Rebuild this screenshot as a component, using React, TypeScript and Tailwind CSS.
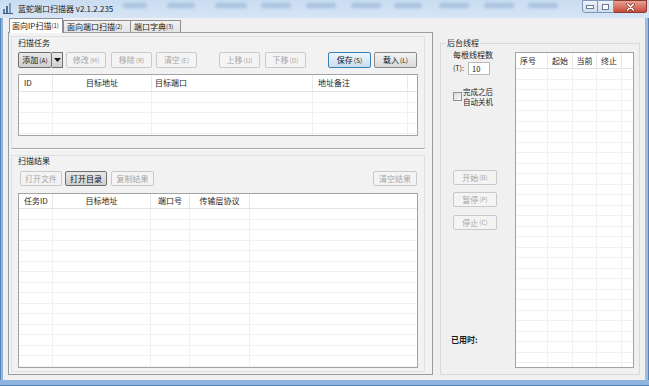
import React from "react";

type Col = { cls: string; label: string; center?: boolean; pad?: string };

function List({
  cols,
  size,
  headerH,
  rowH,
  rows,
}: {
  cols: Col[];
  size: string;
  headerH: string;
  rowH: string;
  rows: number;
}) {
  return (
    <div className={`flex flex-col border border-[#a3a3a3] bg-white overflow-hidden shrink-0 ${size}`}>
      <div className={`flex shrink-0 border-b border-[#e2e2e2] ${headerH}`}>
        {cols.map((c, i) => (
          <div
            key={i}
            className={`${c.cls} shrink-0 h-full border-r border-[#e8e8e8] flex items-center text-[8px] leading-none text-[#1e1e1e] ${
              c.center ? "justify-center" : "justify-start"
            } ${c.pad ?? ""}`}
          >
            {c.label}
          </div>
        ))}
        <div className="flex-1" />
      </div>
      {Array.from({ length: rows }).map((_, r) => (
        <div key={r} className={`flex shrink-0 border-b border-[#f1f1f1] ${rowH}`}>
          {cols.map((c, i) => (
            <div key={i} className={`${c.cls} shrink-0 h-full border-r border-[#f1f1f1]`} />
          ))}
          <div className="flex-1" />
        </div>
      ))}
    </div>
  );
}

function Btn({
  label,
  hk,
  cls,
  kind,
}: {
  label: string;
  hk?: string;
  cls: string;
  kind: "dis" | "en" | "def" | "dark";
}) {
  const k =
    kind === "dis"
      ? "border-[#c9c9c9] bg-[#f4f4f4] text-[#a6a6a6]"
      : kind === "def"
      ? "border-[#3c7fb1] bg-linear-to-b from-[#eef6fc] to-[#c9def0] text-[#111]"
      : kind === "dark"
      ? "border-[#6f6f6f] bg-linear-to-b from-[#e9e9e9] to-[#cfcfcf] text-[#111]"
      : "border-[#8a8a8a] bg-linear-to-b from-[#f4f4f4] to-[#dadada] text-[#111]";
  return (
    <div
      className={`shrink-0 flex items-center justify-center border rounded-[2px] text-[8px] leading-none ${k} ${cls}`}
    >
      <span>{label}</span>
      {hk && <span className="text-[6.5px] ml-[1px]">{hk}</span>}
    </div>
  );
}

const smudges: [number, number][] = [
  [10, 24],
  [20, 28],
  [20, 32],
  [14, 30],
  [15, 30],
  [15, 30],
  [13, 28],
  [17, 30],
  [15, 30],
  [14, 30],
];

export default function App() {
  const upperCols: Col[] = [
    { cls: "w-[34px]", label: "ID", pad: "pl-[5px]" },
    { cls: "w-[99px]", label: "目标地址", center: true },
    { cls: "w-[161px]", label: "目标端口", pad: "pl-[3px]" },
    { cls: "w-[95px]", label: "地址备注", pad: "pl-[5px]" },
  ];
  const lowerCols: Col[] = [
    { cls: "w-[34px]", label: "任务ID", pad: "pl-[5px]" },
    { cls: "w-[98px]", label: "目标地址", center: true },
    { cls: "w-[39px]", label: "端口号", center: true },
    { cls: "w-[60px]", label: "传输层协议", center: true },
  ];
  const rightCols: Col[] = [
    { cls: "w-[32px]", label: "序号", pad: "pl-[4px]" },
    { cls: "w-[25px]", label: "起始", center: true },
    { cls: "w-[24px]", label: "当前", center: true },
    { cls: "w-[25px]", label: "终止", center: true },
  ];

  return (
    <div className="w-[649px] h-[386px] overflow-hidden flex flex-col bg-[#bcd3ec] font-['Noto_Sans_CJK_SC','Noto_Sans',sans-serif] text-[#1c1c1c]">
      {/* Title bar */}
      <div className="h-[18px] shrink-0 flex items-start bg-linear-to-b from-[#c9dcf1] to-[#d6e5f5]">
        <svg className="mt-[3px] ml-[3px] shrink-0" width="10" height="11" viewBox="0 0 10 11">
          <rect x="0" y="6" width="2" height="5" fill="#5a7fa8" />
          <rect x="3" y="3" width="2" height="8" fill="#4a6f9a" />
          <rect x="6" y="0" width="2" height="11" fill="#7d9cc0" />
          <rect x="0" y="10" width="10" height="1" fill="#3f5f85" />
        </svg>
        <div className="ml-[5px] mt-[4px] h-[10px] leading-[10px] text-[8px] text-[#1a1a1a] whitespace-nowrap shrink-0">
          蓝蛇端口扫描器 v2.1.2.235
        </div>
        <div className="flex items-start mt-[3px] shrink-0">
          {smudges.map(([m, w], i) => (
            <div
              key={i}
              className="h-[5px] rounded-[3px] bg-[#a9c2e0] blur-[1.5px]"
              style={{ marginLeft: m, width: w }}
            />
          ))}
        </div>
        <div className="ml-auto mr-[2px] flex shrink-0">
          <div className="w-[16px] h-[13px] border border-[#7d98bb] rounded-bl-[3px] bg-linear-to-b from-[#eef3fa] to-[#cddcee] flex items-end justify-center pb-[3px]">
            <div className="w-[6px] h-[2px] bg-white border border-[#6c7c90] box-content" />
          </div>
          <div className="w-[16px] h-[13px] border border-l-0 border-[#7d98bb] bg-linear-to-b from-[#eef3fa] to-[#cddcee] flex items-center justify-center">
            <div className="w-[7px] h-[6px] border border-[#6c7c90] bg-white" />
          </div>
          <div className="w-[33px] h-[13px] border border-l-0 border-[#8a3a33] rounded-br-[3px] bg-linear-to-b from-[#e8a394] to-[#c8473a] flex items-center justify-center">
            <svg width="9" height="8" viewBox="0 0 9 8">
              <path d="M1.5 1 L7.5 7 M7.5 1 L1.5 7" stroke="#7a3a33" strokeWidth="3" strokeLinecap="round" />
              <path d="M1.5 1 L7.5 7 M7.5 1 L1.5 7" stroke="#ffffff" strokeWidth="1.6" strokeLinecap="round" />
            </svg>
          </div>
        </div>
      </div>

      {/* Body */}
      <div className="flex h-[362px] shrink-0">
        <div className="w-[3px] shrink-0 bg-[#8fb3da] border-l border-[#5584b9]" />
        <div className="w-[642px] shrink-0 bg-[#f0f0f0] flex items-start">
          {/* Tab control */}
          <div className="ml-[5px] w-[425px] shrink-0 flex flex-col">
            <div className="h-[14px] flex items-end pl-[1px]">
              <div className="relative z-10 w-[54px] h-[15px] -mb-[1px] bg-white border border-b-0 border-[#8c8e94] flex items-center pl-[2px] text-[8px] leading-none whitespace-nowrap">
                面向IP扫描<span className="text-[6px]">(1)</span>
              </div>
              <div className="w-[68px] h-[12px] bg-linear-to-b from-[#f3f3f3] to-[#e3e3e3] border border-b-0 border-[#8c8e94] flex items-center pl-[3px] text-[8px] leading-none whitespace-nowrap">
                面向端口扫描<span className="text-[6px]">(2)</span>
              </div>
              <div className="w-[50px] h-[12px] bg-linear-to-b from-[#f3f3f3] to-[#e3e3e3] border border-b-0 border-l-0 border-[#8c8e94] flex items-center pl-[3px] text-[8px] leading-none whitespace-nowrap">
                端口字典<span className="text-[6px]">(3)</span>
              </div>
            </div>
            <div className="h-[343px] border border-[#9a9ca2] bg-[#f2f2f2] flex flex-col">
              {/* Upper group */}
              <div className="mt-[3px] ml-[2px] w-[414px] h-[113px] shrink-0 border border-[#e0e0e0] border-b-[#a6a6a6] shadow-[0_1px_0_#ffffff] pl-[6px] flex flex-col">
                <div className="mt-[1px] h-[10px] leading-[10px] text-[8px]">扫描任务</div>
                <div className="mt-[4px] h-[16px] flex">
                  <div className="flex shrink-0">
                    <Btn label="添加" hk="(A)" cls="w-[34px] h-[16px]" kind="dark" />
                    <div className="w-[11px] h-[16px] border border-l-0 border-[#6f6f6f] bg-linear-to-b from-[#e9e9e9] to-[#cfcfcf] flex items-center justify-center">
                      <svg width="7" height="4" viewBox="0 0 7 4">
                        <path d="M0 0 H7 L3.5 4 Z" fill="#111" />
                      </svg>
                    </div>
                  </div>
                  <Btn label="修改" hk="(M)" cls="ml-[3px] w-[40px] h-[16px]" kind="dis" />
                  <Btn label="移除" hk="(R)" cls="ml-[5px] w-[41px] h-[16px]" kind="dis" />
                  <Btn label="清空" hk="(E)" cls="ml-[4px] w-[41px] h-[16px]" kind="dis" />
                  <Btn label="上移" hk="(U)" cls="ml-[22px] w-[41px] h-[16px]" kind="dis" />
                  <Btn label="下移" hk="(D)" cls="ml-[5px] w-[41px] h-[16px]" kind="dis" />
                  <Btn label="保存" hk="(S)" cls="ml-[22px] w-[43px] h-[16px]" kind="def" />
                  <Btn label="载入" hk="(L)" cls="ml-[3px] w-[43px] h-[16px]" kind="en" />
                </div>
                <div className="mt-[6px]">
                  <List cols={upperCols} size="w-[400px] h-[62px]" headerH="h-[17px]" rowH="h-[10.5px]" rows={5} />
                </div>
              </div>

              {/* Lower group */}
              <div className="mt-[6px] ml-[2px] w-[414px] h-[217px] shrink-0 border border-[#e0e0e0] pl-[6px] flex flex-col">
                <div className="h-[10px] leading-[10px] text-[8px]">扫描结果</div>
                <div className="mt-[5px] h-[15px] flex pl-[2px]">
                  <Btn label="打开文件" cls="w-[42px] h-[15px]" kind="dis" />
                  <Btn label="打开目录" cls="ml-[3px] w-[42px] h-[15px]" kind="dark" />
                  <Btn label="复制结果" cls="ml-[4px] w-[43px] h-[15px]" kind="dis" />
                  <Btn label="清空结果" cls="ml-[219px] w-[44px] h-[15px]" kind="dis" />
                </div>
                <div className="mt-[7px]">
                  <List cols={lowerCols} size="w-[400px] h-[175px]" headerH="h-[15px]" rowH="h-[10.5px]" rows={16} />
                </div>
              </div>
            </div>
          </div>

          {/* Right group */}
          <fieldset className="mt-[20px] ml-[7px] w-[200px] h-[337px] shrink-0 border border-[#dadada]">
            <legend className="ml-[5px] px-[1px] h-[10px] leading-[10px] text-[8px]">后台线程</legend>
            <div className="flex">
              <div className="w-[74px] shrink-0 flex flex-col">
                <div className="mt-[2px] pl-[12px] h-[10px] leading-[10px] text-[8px]">每根线程数</div>
                <div className="mt-[2px] pl-[12px] h-[13px] flex items-center">
                  <span className="w-[15px] text-[7px] leading-none">(T):</span>
                  <div className="w-[22px] h-[13px] border border-[#b9b9b9] bg-white flex items-center pl-[3px] text-[7.5px] leading-none">
                    10
                  </div>
                </div>
                <div className="mt-[12px] pl-[12px] flex items-start">
                  <div className="mt-[5px] w-[9px] h-[9px] shrink-0 border border-[#8e8f8f] bg-linear-to-br from-[#dcdcdc] to-[#f8f8f8]" />
                  <div className="ml-[1px] flex flex-col text-[7.5px] leading-[10px]">
                    <span className="block h-[10px]">完成之后</span>
                    <span className="block h-[10px]">自动关机</span>
                  </div>
                </div>
                <div className="mt-[63px] pl-[12px] flex flex-col">
                  <Btn label="开始" hk="(B)" cls="w-[44px] h-[15px]" kind="dis" />
                  <Btn label="暂停" hk="(P)" cls="mt-[7px] w-[44px] h-[15px]" kind="dis" />
                  <Btn label="停止" hk="(C)" cls="mt-[8px] w-[44px] h-[15px]" kind="dis" />
                </div>
                <div className="mt-[105px] pl-[10px] h-[10px] leading-[10px] text-[8px] font-bold">已用时:</div>
              </div>
              <div className="mt-[4px]">
                <List cols={rightCols} size="w-[119px] h-[316px]" headerH="h-[16px]" rowH="h-[10.5px]" rows={30} />
              </div>
            </div>
          </fieldset>
        </div>
        <div className="w-[4px] shrink-0 bg-[#9dbde2] border-r border-[#5584b9]" />
      </div>
      <div className="h-[6px] shrink-0 bg-[#8fb4de] border-b border-[#5584b9]" />
    </div>
  );
}
